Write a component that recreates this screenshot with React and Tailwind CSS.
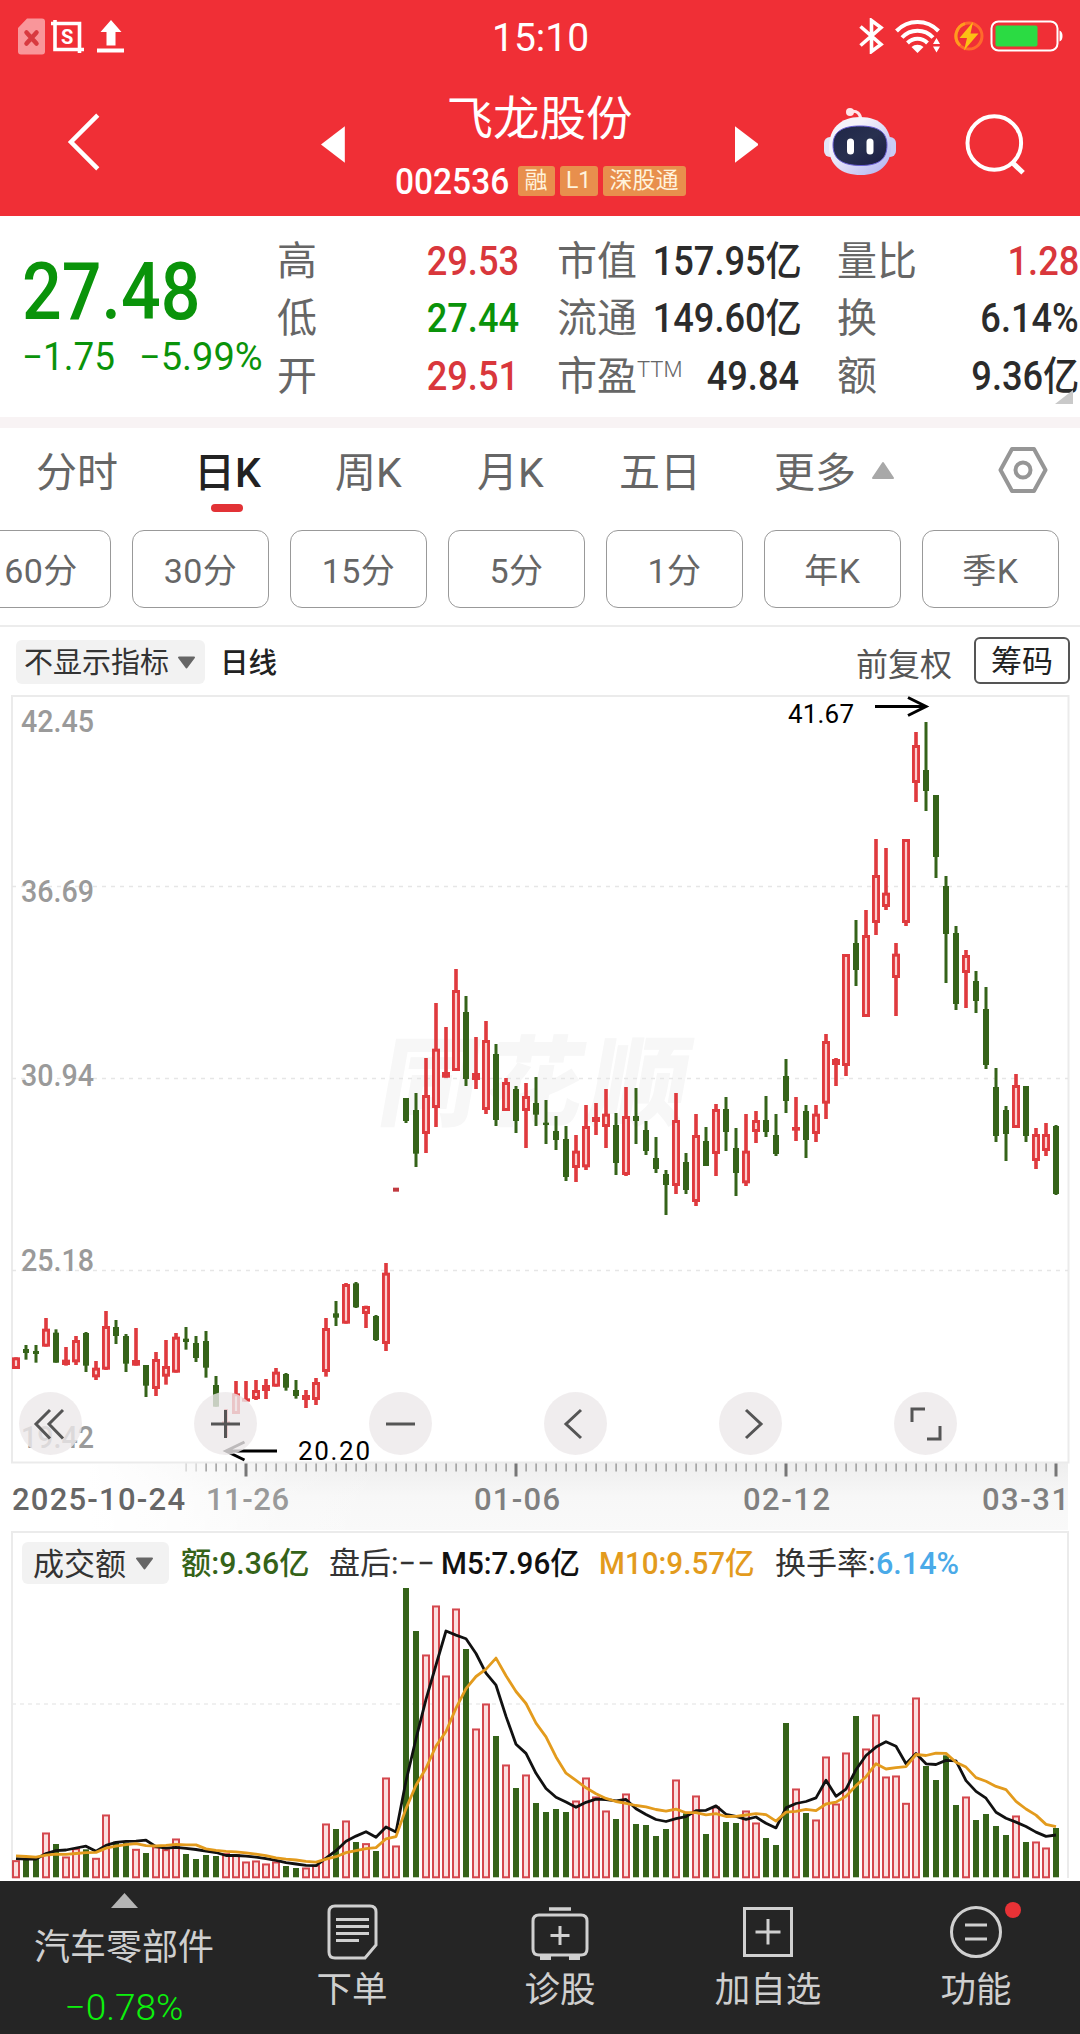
const UP = '#df3a3e';
const DOWN = '#356319';

const BASE_X = 16;
const STEP = 10;
const CHART_TOP = 696;
const VOL_TOP = 1530;

// [colour, high, body top, body bottom, low], in thirds of a pixel below `from`
const CANDLES = [
  {
    from: 1200,
    rows: [
      ['r', 472, 472, 507, 507], ['g', 435, 447, 459, 479], ['g', 435, 453, 462, 488], ['r', 354, 386, 440, 440],
      ['g', 388, 398, 488, 488], ['r', 441, 479, 495, 497], ['r', 408, 420, 487, 495], ['g', 396, 399, 497, 516],
      ['r', 483, 503, 532, 540], ['r', 333, 378, 509, 510], ['g', 360, 381, 408, 432], ['g', 402, 408, 491, 516],
      ['r', 384, 480, 497, 497], ['g', 495, 495, 557, 591], ['r', 456, 477, 567, 588], ['r', 420, 498, 530, 554],
      ['r', 399, 410, 518, 518], ['g', 381, 416, 426, 449], ['g', 408, 429, 474, 486], ['g', 393, 423, 503, 533],
      ['g', 528, 555, 620, 620], ['r', 627, 664, 675, 712], ['r', 543, 580, 642, 642], ['r', 543, 595, 605, 605],
      ['r', 540, 570, 597, 600], ['r', 537, 555, 573, 597], ['r', 504, 515, 560, 560], ['g', 519, 522, 563, 572],
      ['g', 540, 570, 588, 596], ['r', 570, 585, 600, 624], ['r', 534, 546, 600, 615], ['r', 354, 384, 516, 530],
      ['g', 303, 340, 353, 378], ['r', 249, 252, 371, 371], ['g', 246, 250, 322, 324], ['r', 317, 318, 342, 384],
      ['g', 345, 348, 420, 423], ['r', 189, 218, 432, 453],
    ],
  },
  {
    from: 940,
    rows: [
      ['flat', 743, 743, 755, 755], ['g', 474, 474, 543, 549], ['g', 459, 510, 641, 681], ['r', 354, 465, 582, 639],
      ['r', 189, 326, 504, 561], ['r', 261, 396, 413, 413], ['r', 87, 150, 393, 393], ['g', 168, 216, 417, 438],
      ['r', 291, 399, 420, 447], ['r', 243, 300, 510, 522], ['g', 312, 342, 540, 558], ['r', 414, 426, 513, 513],
      ['g', 438, 447, 543, 579], ['r', 429, 468, 513, 624], ['g', 411, 489, 524, 558], ['g', 480, 548, 555, 612],
      ['g', 528, 573, 600, 630], ['g', 558, 597, 711, 723], ['r', 585, 632, 684, 726], ['r', 495, 558, 682, 690],
      ['r', 489, 531, 546, 585], ['r', 447, 521, 561, 624], ['g', 519, 555, 669, 705], ['r', 441, 528, 705, 708],
      ['g', 444, 528, 543, 612], ['g', 543, 570, 633, 645], ['g', 591, 654, 687, 699], ['g', 690, 702, 735, 825],
      ['r', 459, 540, 738, 762], ['g', 639, 666, 750, 762], ['r', 522, 585, 786, 798], ['g', 561, 603, 678, 678],
      ['r', 492, 507, 642, 708], ['g', 471, 507, 576, 633], ['g', 564, 624, 699, 768], ['r', 522, 632, 730, 738],
      ['r', 513, 540, 576, 609], ['g', 468, 540, 576, 591], ['g', 522, 585, 642, 648], ['g', 357, 408, 483, 519],
      ['r', 471, 561, 572, 603], ['g', 495, 513, 600, 654], ['r', 495, 521, 582, 606], ['r', 282, 303, 491, 537],
      ['r', 354, 357, 375, 438], ['r', 42, 42, 378, 408],
    ],
  },
  {
    from: 690,
    rows: [
      ['g', 690, 759, 840, 888], ['r', 660, 735, 981, 981], ['r', 447, 555, 699, 735], ['r', 474, 608, 651, 660],
      ['r', 759, 791, 864, 978], ['r', 447, 447, 699, 708], ['r', 126, 165, 279, 336], ['g', 96, 240, 303, 363],
      ['g', 315, 315, 501, 564], ['g', 558, 588, 732, 879], ['g', 708, 729, 942, 960], ['r', 780, 795, 849, 954],
      ['g', 843, 873, 933, 969],
    ],
  },
  {
    from: 940,
    rows: [
      ['g', 141, 207, 375, 387], ['g', 384, 441, 588, 606], ['g', 498, 510, 582, 663], ['r', 402, 435, 564, 564],
      ['g', 438, 438, 588, 606], ['r', 564, 582, 663, 687], ['r', 549, 582, 633, 648], ['g', 555, 558, 762, 765],
    ],
  },
];

const candles = CANDLES.flatMap(({ from, rows }) =>
  rows.map(([kind, ...v]) => [kind, ...v.map((n) => from + n / 3 - CHART_TOP)])
);

// tops of the turnover bars; the leading nine days are only used by the averages
const EARLIER = [995, 995, 1000, 1000, 1005, 1010, 1015, 1020, 1015];
const TURNOVER = [
  1021, 1015, 1015, 938, 972, 1010, 985, 988, 1014, 884, 965, 968, 987, 999, 980, 988, 956, 1002, 1017, 1005,
  1008, 1000, 1003, 1025, 1022, 1031, 1025, 1038, 1044, 1043, 1035, 911, 927, 902, 966, 970, 993, 773, 977, 204,
  333, 404, 257, 467, 266, 387, 626, 551, 648, 734, 804, 764, 849, 876, 867, 876, 842, 773, 830, 872,
  897, 821, 912, 915, 948, 927, 779, 880, 827, 942, 860, 906, 909, 872, 908, 954, 975, 609, 806, 879,
  899, 710, 851, 698, 588, 686, 584, 770, 767, 849, 533, 738, 780, 706, 855, 830, 900, 882, 918, 945,
  887, 966, 965, 983, 924,
];
const VOL_BOTTOM = 1877.3 - VOL_TOP;
const volY = (v) => 1520 + v / 3 - VOL_TOP;

const average = (days) => {
  const all = [...EARLIER, ...TURNOVER];
  return TURNOVER.map((_, i) => {
    const end = i + EARLIER.length + 1;
    const sum = all.slice(end - days, end).reduce((a, b) => a + b, 0);
    return `${BASE_X + STEP * i},${volY(sum / days).toFixed(1)}`;
  }).join(' ');
};

const quotes = [
  [
    { label: '高', value: '29.53', color: 'text-[#d9373c]' },
    { label: '低', value: '27.44', color: 'text-[#0a930a]' },
    { label: '开', value: '29.51', color: 'text-[#d9373c]' },
  ],
  [
    { label: '市值', value: '157.95亿', color: 'text-[#2b2b2b]' },
    { label: '流通', value: '149.60亿', color: 'text-[#2b2b2b]' },
    { label: '市盈', sup: 'TTM', value: '49.84', color: 'text-[#2b2b2b]' },
  ],
  [
    { label: '量比', value: '1.28', color: 'text-[#d9373c]' },
    { label: '换', value: '6.14%', color: 'text-[#2b2b2b]' },
    { label: '额', value: '9.36亿', color: 'text-[#2b2b2b]' },
  ],
];

const StatusBar = () => (
  <div className="h-[72px] flex items-center pl-[18px] pr-[17px] text-white">
    <div className="w-[474px] flex items-center">
      <svg width="27" height="37" viewBox="0 0 27 37">
        <path d="M9 0.5H24a3 3 0 0 1 3 3V33.500a3 3 0 0 1-3 3H3a3 3 0 0 1-3-3V10Z" fill="#f9969a" />
        <path d="M8.500 14.500l10 11M18.500 14.500l-10 11" stroke="#d83a40" strokeWidth="4.500" strokeLinecap="round" />
      </svg>
      <svg className="ml-[6px]" width="33" height="33" viewBox="0 0 33 33" fill="none" stroke="currentColor">
        <path d="M0 3.500H28.500V33M4 0V29.500H33" strokeWidth="3.600" />
        <text x="16.200" y="23.500" fontSize="20" fontWeight="700" fontFamily="Roboto" textAnchor="middle" fill="currentColor" stroke="none">S</text>
      </svg>
      <svg className="ml-[13px]" width="28" height="33" viewBox="0 0 28 33" fill="currentColor">
        <path d="M14 0L24.500 12H18.500V25.500H9.500V12H3.500ZM0 28.500H27V32.500H0Z" />
      </svg>
    </div>
    <div className="flex-1 pt-[4px] text-[39px] leading-none font-[Roboto]">15:10</div>
    <div className="flex items-center">
      <svg width="26" height="36" viewBox="0 0 26 36" fill="none" stroke="currentColor" strokeWidth="3.600">
        <path d="M1.500 8.500L22 26.500 12.500 33.500V2.500L22 9.500 1.500 27.500" />
      </svg>
      <svg className="ml-[10px]" width="46" height="34" viewBox="0 0 46 34" fill="none" stroke="currentColor" strokeWidth="4">
        <path d="M1.500 12A29 29 0 0 1 43.500 12M7 18.500A21 21 0 0 1 38 18.500M12.500 24A14 14 0 0 1 32.500 24" />
        <path d="M16.500 28A9 9 0 0 1 28.500 28L22.500 34Z" fill="currentColor" stroke="none" />
        <path d="M38 25L41.500 19 45 25ZM38 27.500L41.500 33.500 45 27.500Z" fill="currentColor" stroke="none" />
      </svg>
      <svg className="ml-[12px]" width="32" height="32" viewBox="0 0 32 32">
        <circle cx="16" cy="16" r="13" fill="none" stroke="#ff6a2b" strokeWidth="3" />
        <path d="M7 25.500A13 13 0 0 1 12 3.600" fill="none" stroke="#ff9b1e" strokeWidth="3" />
        <path d="M20 2L6.500 18H14L11 30.500 25.500 13.500H17.500Z" fill="#fcc014" />
      </svg>
      <svg className="ml-[5px]" width="73" height="32" viewBox="0 0 73 32">
        <rect x="1.500" y="1.500" width="66" height="29" rx="7" fill="none" stroke="#fff" strokeWidth="2" />
        <rect x="5.500" y="5.500" width="42" height="21" rx="2" fill="#2bdb43" />
        <path d="M69.500 10.500q3 1 3 5.500t-3 5.500Z" fill="#fff" />
      </svg>
    </div>
  </div>
);

const Robot = () => (
  <svg width="72" height="70" viewBox="0 0 72 70">
    <defs>
      <linearGradient id="shell" x1="0" y1="0" x2="1" y2="1">
        <stop offset="0.300" stopColor="#f5f3fa" />
        <stop offset="1" stopColor="#aeb0f0" />
      </linearGradient>
      <linearGradient id="visor" x1="0" y1="0" x2="1" y2="1">
        <stop offset="0" stopColor="#1f2648" />
        <stop offset="0.500" stopColor="#28304f" />
        <stop offset="1" stopColor="#1b1c42" />
      </linearGradient>
    </defs>
    <circle cx="26" cy="5" r="4" fill="#ffe4e8" />
    <path d="M27 4.500Q36 3 37 13" fill="none" stroke="#ffe4e8" strokeWidth="3" />
    <rect x="0" y="30" width="12" height="20" rx="6" fill="#e4e6f8" />
    <rect x="60" y="30" width="12" height="20" rx="6" fill="#c9ccf5" />
    <path d="M36 10C57 10 67 22 67 40 67 58 55 68 37 68 17 68 5 58 5 40 5 22 16 10 36 10Z" fill="url(#shell)" />
    <path d="M36 19C54 19 63 25 63 38 63 52 55 58.500 37 58.500 18 58.500 9 52 9 38 9 25 18 19 36 19Z" fill="url(#visor)" stroke="#6a5fd6" strokeWidth="1" />
    <rect x="23" y="31.500" width="7" height="16" rx="3.500" fill="#fff" />
    <rect x="42.500" y="31.500" width="7" height="16" rx="3.500" fill="#fff" />
  </svg>
);

const Badge = ({ children, className }) => (
  <span className={`h-[30px] rounded-[3px] bg-[#e88f4d] text-[#fff3dc] text-[23px] leading-[30px] text-center ${className}`}>{children}</span>
);

const Header = () => (
  <div className="h-[144px] flex pl-[66px] pr-[53px] text-white">
    <svg className="mt-[41px]" width="34" height="58" viewBox="0 0 34 58" fill="none" stroke="currentColor" strokeWidth="4.500">
      <path d="M32 2L5 29 32 56" />
    </svg>
    <svg className="mt-[54px] ml-[221px]" width="24" height="37" viewBox="0 0 24 37" fill="currentColor">
      <path d="M0 18.500L24 0V37Z" />
    </svg>
    <div className="ml-[50px] flex flex-col">
      <div className="mt-[22px] ml-[52px] text-[46.500px] leading-[50px]">飞龙股份</div>
      <div className="mt-[18px] flex items-center">
        <span className="w-[123px] pt-[2px] text-[37px] leading-[36px] font-medium font-[Roboto] origin-left scale-x-[0.905]">002536</span>
        <Badge className="w-[37px]">融</Badge>
        <Badge className="w-[38px] ml-[5px]">L1</Badge>
        <Badge className="w-[83px] ml-[5px]">深股通</Badge>
      </div>
    </div>
    <svg className="mt-[54px] ml-[49px]" width="24" height="37" viewBox="0 0 24 37" fill="currentColor">
      <path d="M24 18.500L0 0V37Z" />
    </svg>
    <div className="mt-[35px] ml-[66px]"><Robot /></div>
    <svg className="mt-[41px] ml-[69px]" width="62" height="62" viewBox="0 0 62 62" fill="none" stroke="currentColor" strokeWidth="4">
      <circle cx="29.500" cy="30" r="27" />
      <path d="M48 50L58.500 60" strokeWidth="5" />
    </svg>
  </div>
);

const Quote = () => (
  <div className="h-[201px] flex bg-white overflow-hidden relative">
    <div className="w-[277px] shrink-0 pl-[22px] text-[#0a930a] font-medium font-[Roboto] whitespace-nowrap">
      <div className="mt-[36px] text-[79px] leading-[80px] origin-left scale-x-[0.885]">27.48</div>
      <div className="mt-[5px] flex text-[38px] leading-[40px] font-normal">
        <span className="w-[117px] origin-left scale-x-[0.97]">−1.75</span>
        <span>−5.99%</span>
      </div>
    </div>
    {quotes.map((column, i) => (
      <div key={i} className="w-[242px] mr-[38px] shrink-0 pt-[17px]">
        {column.map((q) => (
          <div key={q.label} className="h-[57.500px] flex items-center justify-between whitespace-nowrap">
            <span className="text-[40px] leading-[56px] text-[#666] flex">
              {q.label}
              {q.sup && <span className="text-[22px] leading-[42px] font-light font-[Roboto]">{q.sup}</span>}
            </span>
            <span className={`text-[40px] leading-[56px] font-medium origin-right scale-x-[0.905] ${q.color}`}>{q.value}</span>
          </div>
        ))}
      </div>
    ))}
    <svg className="absolute right-[7px] bottom-[13px]" width="18" height="14" viewBox="0 0 18 14">
      <path d="M18 0V14H0Z" fill="#c9c9c9" />
    </svg>
  </div>
);

const Tabs = () => (
  <div className="h-[102px] flex text-[41px] leading-[48px] text-[#666] whitespace-nowrap pt-[21px] pl-[36px]">
    <span className="w-[158px]">分时</span>
    <div className="w-[141px]">
      <div className="text-[#222] font-medium">日K</div>
      <div className="mt-[7px] ml-[17px] w-[32px] h-[8px] rounded-full bg-[#e23236]" />
    </div>
    <span className="w-[142px]">周K</span>
    <span className="w-[142px]">月K</span>
    <span className="w-[155px]">五日</span>
    <span>更多</span>
    <svg className="mt-[12px] ml-[15px]" width="24" height="19" viewBox="0 0 24 19">
      <path d="M12 2L22 17H2Z" fill="#a8a8a8" stroke="#a8a8a8" strokeWidth="2" strokeLinejoin="round" />
    </svg>
    <svg className="-mt-[3px] ml-[103px]" width="50" height="48" viewBox="0 0 50 48" fill="none" stroke="#969696" strokeWidth="4" strokeLinejoin="round">
      <path d="M14 3H36L47.500 24 36 45H14L2.500 24Z" />
      <circle cx="25" cy="24" r="7.500" />
    </svg>
  </div>
);

const Periods = () => (
  <div className="h-[97px] flex gap-[21px] overflow-hidden border-b-2 border-[#ececec]">
    {['60分', '30分', '15分', '5分', '1分', '年K', '季K'].map((label, i) => (
      <div
        key={label}
        className={`w-[137px] h-[78px] shrink-0 rounded-[12px] border border-[#999] text-[#666] text-[34px] leading-[80px] tracking-[0.500px] text-center ${i === 0 ? '-ml-[26px] pr-[3px]' : ''}`}
      >
        {label}
      </div>
    ))}
  </div>
);

const Caret = ({ className }) => (
  <svg className={className} width="19" height="13" viewBox="0 0 19 13">
    <path d="M2 1.500H17L9.500 11.500Z" fill="#666" stroke="#666" strokeWidth="2" strokeLinejoin="round" />
  </svg>
);

const Toolbar = () => (
  <div className="h-[69px] flex items-start pl-[16px] pr-[10px] pt-[10px] text-[#333] whitespace-nowrap">
    <div className="mt-[3px] w-[189px] h-[44px] rounded-[6px] bg-[#f2f2f2] flex items-center pl-[8px] text-[29px]">
      <span className="pt-[3px]">不显示指标</span>
      <Caret className="ml-[8px]" />
    </div>
    <span className="mt-[5px] ml-[15px] text-[28.500px] leading-[44px] font-medium text-[#222]">日线</span>
    <span className="mt-[6px] ml-auto text-[32px] leading-[44px] text-[#555]">前复权</span>
    <span className="ml-[22px] w-[96px] h-[47px] rounded-[6px] border-2 border-[#555] text-[31px] leading-[46px] text-center text-[#222]">筹码</span>
  </div>
);

const Candle = ({ x, candle: [kind, high, top, bottom, low] }) => {
  if (kind === 'flat') return <rect x={x - 3} y={top} width="6" height={bottom - top} fill="#c13a40" />;
  if (kind === 'g') {
    return (
      <g fill={DOWN}>
        <rect x={x - 1.5} y={high} width="3" height={low - high} />
        <rect x={x - 3} y={top} width="6" height={bottom - top} />
      </g>
    );
  }
  const h = bottom - top;
  return (
    <g fill={UP}>
      <rect x={x - 1.8} y={high} width="3.600" height={low - high} />
      <rect x={x - 4} y={top} width="8" height={h} />
      {h > 7 && <rect x={x - 1.1} y={top + 3} width="2.200" height={h - 6} fill="#fbd0d0" />}
    </g>
  );
};

const AXIS = [
  { label: '42.45', y: 36 },
  { label: '36.69', y: 206 },
  { label: '30.94', y: 390 },
  { label: '25.18', y: 575 },
  { label: '19.42', y: 752 },
];

const CONTROLS = [
  'M31 18L17 32L31 46.500M44 18L30 32L44 46.500',
  'M17 32H46M31.500 18V46',
  'M17 32H46',
  'M37 18L22 32L37 46',
  'M27 18L42 32L27 46',
  'M18 30V17H31M46 34V47H33',
];

const PriceChart = () => (
  <div className="relative h-[767px]">
    <svg className="overflow-visible" width="1080" height="767" viewBox="0 0 1080 767">
      <text x="378" y="422" fontSize="98" fontWeight="900" fill="#f7f7f7" textLength="308" transform="translate(72 0) skewX(-10)">同花顺</text>
      <rect x="12" y="0" width="1056.500" height="766.500" fill="none" stroke="#ebebeb" strokeWidth="2" />
      {[190.5, 382.5, 574.5].map((y) => (
        <path key={y} d={`M12 ${y}H1068`} stroke="#e6e6e6" strokeWidth="1.500" strokeDasharray="4 5" />
      ))}
      {AXIS.map((a) => (
        <text key={a.label} x="21" y={a.y} fontSize="31" fontWeight="500" fontFamily="Roboto" fill="#9a9a9a" textLength="73" lengthAdjust="spacingAndGlyphs">{a.label}</text>
      ))}
      {candles.map((c, i) => <Candle key={i} x={BASE_X + STEP * i} candle={c} />)}
      <g fontSize="26" fontFamily="Roboto" fill="#000">
        <text x="788" y="27" textLength="66">41.67</text>
        <text x="298" y="764" textLength="72">20.20</text>
      </g>
      <g fill="none" stroke="#000" strokeWidth="3">
        <path d="M875 10.500H925M908 1.500L926 10.500L908 19.500" />
        <path d="M277 755H227M244.500 746L226 755L244.500 764" />
      </g>
    </svg>
    <div className="absolute left-[19px] top-[695.500px] flex gap-[112px]">
      {CONTROLS.map((d) => (
        <svg key={d} width="63" height="63" viewBox="0 0 63 63" fill="none">
          <circle cx="31.500" cy="31.500" r="31.500" fill="#ece9ea" fillOpacity="0.800" />
          <path d={d} stroke="#555" strokeWidth="3" />
        </svg>
      ))}
    </div>
  </div>
);

const DateStrip = () => (
  <div className="h-[67px] px-[12px]">
    <svg width="1056" height="67" viewBox="12 0 1056 67" fontSize="31" fontWeight="500" fontFamily="Roboto" fill="#808080">
      <defs>
        <linearGradient id="fade" x1="0" y1="0" x2="0" y2="1">
          <stop offset="0" stopColor="#eeeeee" />
          <stop offset="0.500" stopColor="#f7f7f7" />
          <stop offset="1" stopColor="#f9f9f9" />
        </linearGradient>
        <linearGradient id="veil">
          <stop offset="0.200" stopColor="#fff" />
          <stop offset="0.450" stopColor="#fff" stopOpacity="0.700" />
          <stop offset="0.700" stopColor="#fff" stopOpacity="0.200" />
          <stop offset="1" stopColor="#fff" stopOpacity="0" />
        </linearGradient>
      </defs>
      <rect x="12" width="1056" height="67" fill="url(#fade)" />
      <rect x="12" width="380" height="67" fill="url(#veil)" />
      {candles.map((_, i) => i > 16 && (
        <rect key={i} x={BASE_X + STEP * i - 0.5} y="0" width="1.200" height="8.500" fill={i < 19 ? '#ccc' : '#888'} />
      ))}
      {[23, 50, 77, 104].map((i) => (
        <rect key={i} x={BASE_X + STEP * i - 1.5} y="0" width="3" height="13.500" fill="#777" />
      ))}
      <text x="12" y="47" textLength="173" fill="#666">2025-10-24</text>
      <text x="206" y="47" textLength="83" fill="#9a9a9a">11-26</text>
      <text x="474" y="47" textLength="86">01-06</text>
      <text x="743" y="47" textLength="87">02-12</text>
      <text x="982" y="47" textLength="87">03-31</text>
    </svg>
  </div>
);

const VolumeLegend = () => (
  <div className="absolute left-[22px] top-[12px] h-[42px] flex items-center text-[31px] leading-[42px] whitespace-nowrap text-[#333]">
    <div className="w-[147px] h-[42px] rounded-[6px] bg-[#f2f2f2] flex items-center pl-[11px]">
      <span className="pt-[3px]">成交额</span>
      <Caret className="ml-[9px]" />
    </div>
    <div className="flex pt-[2px]">
      <span className="ml-[12px] w-[148px] text-[#356319] font-medium origin-left scale-x-[0.975]">额:9.36亿</span>
      <span className="w-[112px]">盘后:<span className="tracking-[1px]">−−</span></span>
      <span className="w-[158px] text-[#111] font-medium origin-left scale-x-[0.955]">M5:7.96亿</span>
      <span className="w-[176px] text-[#e39b1d] font-medium origin-left scale-x-[0.955]">M10:9.57亿</span>
      <span>换手率:</span>
      <span className="text-[#4aaae8] font-medium origin-left scale-x-[0.985]">6.14%</span>
    </div>
  </div>
);

const VolumeChart = () => (
  <div className="relative h-[351px]">
    <svg width="1080" height="351" viewBox="0 0 1080 351">
      <path d="M12 348V2H1068V348" fill="none" stroke="#ebebeb" strokeWidth="2" />
      <path d="M12 174H1068" stroke="#ececec" strokeWidth="1.500" strokeDasharray="4 4" />
      {TURNOVER.map((v, i) => {
        const x = BASE_X + STEP * i;
        const y = volY(v);
        return candles[i][0] === 'g'
          ? <rect key={i} x={x - 3} y={y} width="6" height={VOL_BOTTOM - y} fill={DOWN} />
          : <rect key={i} x={x - 3} y={y + 0.8} width="6" height={VOL_BOTTOM - y - 0.8} fill="#fbe0e0" stroke="#d4484e" strokeWidth="2" />;
      })}
      <g fill="none" strokeWidth="2.800" strokeLinejoin="round">
        <polyline points={average(5)} stroke="#111" />
        <polyline points={average(10)} stroke="#e39b1d" />
      </g>
    </svg>
    <VolumeLegend />
  </div>
);

const NavItem = ({ label, children }) => (
  <div className="w-[208px] pt-[20px] flex flex-col items-center">
    <svg width="60" height="60" viewBox="0 0 60 60" fill="none" stroke="#d0d0d0" strokeWidth="3">{children}</svg>
    <span className="mt-[7px] text-[35.500px] leading-[44px]">{label}</span>
  </div>
);

const BottomNav = () => (
  <div className="h-[153px] bg-[#252525] flex text-[#cfcfcf]">
    <div className="w-[248px] flex flex-col items-center">
      <svg className="mt-[12px]" width="27" height="15" viewBox="0 0 27 15">
        <path d="M13.500 0L27 15H0Z" fill="#b5b5b5" />
      </svg>
      <span className="mt-[17px] text-[36px] leading-[46px]">汽车零部件</span>
      <span className="mt-[17px] text-[37px] leading-[40px] font-light font-[Roboto] text-[#0cf20c]">−0.78%</span>
    </div>
    <NavItem label="下单">
      <path d="M13 5H48Q54 5 54 11V44L43 57H13Q7 57 7 51V11Q7 5 13 5Z" />
      <path d="M14 18.500H47M14 25.500H47M14 32.500H47M14 39.500H37" />
    </NavItem>
    <NavItem label="诊股">
      <path d="M19 8H41" strokeWidth="3.500" />
      <path d="M9 14H51Q57 14 57 20V48Q57 54 51 54H9Q3 54 3 48V20Q3 14 9 14Z" />
      <path d="M30 25V44M20.500 34.500H39.500" />
      <path d="M10 57H21M39 57H50" strokeWidth="4" />
    </NavItem>
    <NavItem label="加自选">
      <path d="M6.500 7.500H53.500V54.500H6.500Z" />
      <path d="M30 18V43.500M17.500 31H42.500" />
    </NavItem>
    <div className="relative">
      <NavItem label="功能">
        <circle cx="30" cy="31" r="24.500" />
        <path d="M19 24H41M19 38H41" />
      </NavItem>
      <div className="absolute left-[133px] top-[21px] w-[16px] h-[16px] rounded-full bg-[#e83236]" />
    </div>
  </div>
);

const App = () => (
  <div className="w-[1080px] h-[2034px] overflow-hidden bg-white flex flex-col font-[Roboto,'Noto_Sans_CJK_SC',sans-serif]">
    <div className="bg-[#f02f36]">
      <StatusBar />
      <Header />
    </div>
    <Quote />
    <div className="h-[11px] bg-[#f8f3f4]" />
    <Tabs />
    <Periods />
    <Toolbar />
    <PriceChart />
    <DateStrip />
    <VolumeChart />
    <BottomNav />
  </div>
);

export default App;
